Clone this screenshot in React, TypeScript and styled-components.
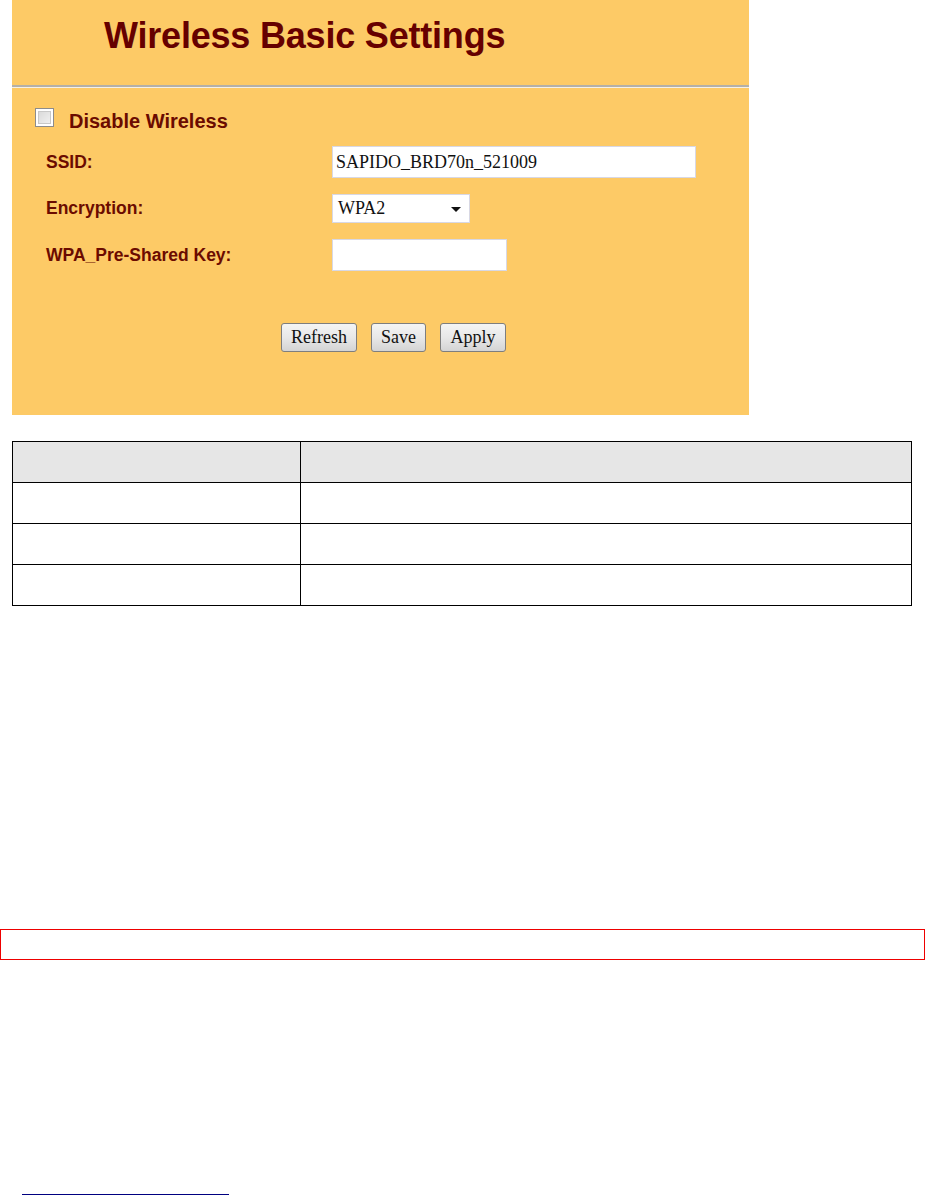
import React from "react";
import styled, { createGlobalStyle } from "styled-components";

const GlobalStyle = createGlobalStyle`
  html, body {
    margin: 0;
    padding: 0;
    background: #ffffff;
    font-family: "Liberation Sans", Arial, sans-serif;
  }
`;

const Page = styled.div`
  width: 927px;
  height: 1197px;
  position: relative;
  overflow: hidden;
`;

// ルーター設定画面のパネル
const Panel = styled.div`
  margin-left: 12px;
  width: 737px;
  height: 415px;
  background: #fdca66;
  display: flex;
  flex-direction: column;
`;

const Header = styled.div`
  height: 85px;
  padding: 15px 0 0 92px;
  box-sizing: border-box;
`;

const Title = styled.h1`
  margin: 0;
  font-family: "Liberation Sans", Arial, sans-serif;
  font-size: 36px;
  font-weight: bold;
  color: #660000;
  letter-spacing: -0.2px;
`;

const Divider = styled.div`
  height: 2px;
  background: #b4b0a8;
  border-bottom: 1px solid #f4f0e8;
`;

const Body = styled.div`
  display: flex;
  flex-direction: column;
  padding: 20px 0 0 23px;
`;

const CheckRow = styled.label`
  display: flex;
  align-items: flex-start;
  gap: 15px;
  height: 20px;
`;

const CheckBox = styled.span`
  width: 17px;
  height: 17px;
  border: 1px solid #8c8c8c;
  background: linear-gradient(135deg, #d4d4d4, #f6f6f6);
  box-shadow: inset 0 0 0 2px #ffffff, inset 0 0 0 3px #c8c8c8;
`;

const CheckLabel = styled.span`
  font-size: 20px;
  line-height: 20px;
  margin-top: 3px;
  font-weight: bold;
  color: #6b0b00;
`;

const FieldRow = styled.div<{ $top: number; $h: number }>`
  display: flex;
  align-items: center;
  margin-top: ${(p) => p.$top}px;
  height: ${(p) => p.$h}px;
`;

const FieldLabel = styled.span`
  width: 297px;
  padding-left: 11px;
  box-sizing: border-box;
  font-size: 17.5px;
  font-weight: bold;
  color: #6b0b00;
`;

const TextBox = styled.div<{ $w: number }>`
  width: ${(p) => p.$w}px;
  height: 100%;
  box-sizing: border-box;
  background: #ffffff;
  border: 1px solid #d8d8e4;
  font-family: "Liberation Serif", "Times New Roman", serif;
  font-size: 18px;
  color: #111111;
  display: flex;
  align-items: center;
  padding-left: 3px;
`;

const Select = styled(TextBox)`
  justify-content: space-between;
  padding-left: 5px;
  padding-right: 8px;
`;

const Caret = styled.span`
  width: 0;
  height: 0;
  border-left: 5px solid transparent;
  border-right: 5px solid transparent;
  border-top: 5px solid #111111;
  margin-top: 2px;
`;

const ButtonRow = styled.div`
  display: flex;
  gap: 14px;
  margin-top: 52px;
  padding-left: 246px;
`;

const Button = styled.button<{ $w: number }>`
  width: ${(p) => p.$w}px;
  height: 29px;
  padding: 0;
  border: 1px solid #7e7e7e;
  border-radius: 3px;
  background: linear-gradient(#f4f4f4, #e8e8e8 50%, #d4d4d4);
  font-family: "Liberation Serif", "Times New Roman", serif;
  font-size: 18px;
  color: #111111;
`;

const Table = styled.table`
  margin: 26px 0 0 12px;
  width: 900px;
  border-collapse: collapse;
`;

const Cell = styled.td<{ $head?: boolean }>`
  border: 1.5px solid #000000;
  height: 40px;
  padding: 0;
  background: ${(p) => (p.$head ? "#e6e6e6" : "#ffffff")};
  &:first-child {
    width: 287px;
  }
`;

const Notice = styled.div`
  position: absolute;
  left: 0;
  top: 929px;
  width: 925px;
  height: 31px;
  box-sizing: border-box;
  border: 1px solid #ee0000;
`;

const FootLine = styled.div`
  position: absolute;
  left: 22px;
  top: 1194px;
  width: 207px;
  height: 1px;
  background: #000080;
`;

const App = () => {
  const rows = [0, 1, 2];

  return (
    <>
      <GlobalStyle />
      <Page>
        <Panel>
          <Header>
            <Title>Wireless Basic Settings</Title>
          </Header>
          <Divider />
          <Body>
            <CheckRow>
              <CheckBox />
              <CheckLabel>Disable Wireless</CheckLabel>
            </CheckRow>
            <FieldRow $top={18} $h={32}>
              <FieldLabel>SSID:</FieldLabel>
              <TextBox $w={364}>SAPIDO_BRD70n_521009</TextBox>
            </FieldRow>
            <FieldRow $top={16} $h={29}>
              <FieldLabel>Encryption:</FieldLabel>
              <Select $w={138}>
                WPA2
                <Caret />
              </Select>
            </FieldRow>
            <FieldRow $top={16} $h={32}>
              <FieldLabel>WPA_Pre-Shared Key:</FieldLabel>
              <TextBox $w={175} />
            </FieldRow>
            <ButtonRow>
              <Button $w={76}>Refresh</Button>
              <Button $w={55}>Save</Button>
              <Button $w={66}>Apply</Button>
            </ButtonRow>
          </Body>
        </Panel>
        <Table>
          <tbody>
            <tr>
              <Cell $head />
              <Cell $head />
            </tr>
            {rows.map((r) => (
              <tr key={r}>
                <Cell />
                <Cell />
              </tr>
            ))}
          </tbody>
        </Table>
        <Notice />
        <FootLine />
      </Page>
    </>
  );
};

export default App;
